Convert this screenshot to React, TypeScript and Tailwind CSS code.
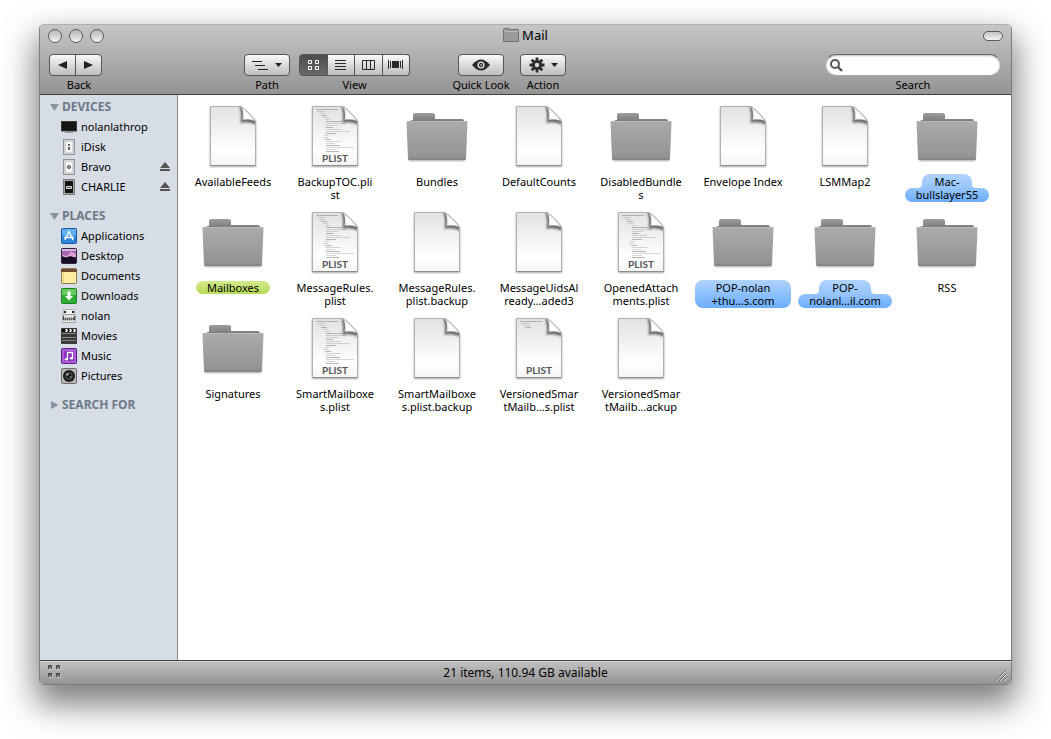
import React, { useState } from 'react';
import { clsx } from 'clsx';

type FileKind = 'doc' | 'plist' | 'folder';
type Tint = 'blue' | 'green';

interface FileEntry {
  lines: string[];
  kind: FileKind;
  tint?: Tint;
  preview?: number;
}

const files: FileEntry[] = [
  { lines: ['AvailableFeeds'], kind: 'doc' },
  { lines: ['BackupTOC.pli', 'st'], kind: 'plist' },
  { lines: ['Bundles'], kind: 'folder' },
  { lines: ['DefaultCounts'], kind: 'doc' },
  { lines: ['DisabledBundle', 's'], kind: 'folder' },
  { lines: ['Envelope Index'], kind: 'doc' },
  { lines: ['LSMMap2'], kind: 'doc' },
  { lines: ['Mac-', 'bullslayer55'], kind: 'folder', tint: 'blue' },
  { lines: ['Mailboxes'], kind: 'folder', tint: 'green' },
  { lines: ['MessageRules.', 'plist'], kind: 'plist' },
  { lines: ['MessageRules.', 'plist.backup'], kind: 'doc' },
  { lines: ['MessageUidsAl', 'ready…aded3'], kind: 'doc' },
  { lines: ['OpenedAttach', 'ments.plist'], kind: 'plist' },
  { lines: ['POP-nolan', '+thu…s.com'], kind: 'folder', tint: 'blue' },
  { lines: ['POP-', 'nolanl…il.com'], kind: 'folder', tint: 'blue' },
  { lines: ['RSS'], kind: 'folder' },
  { lines: ['Signatures'], kind: 'folder' },
  { lines: ['SmartMailboxe', 's.plist'], kind: 'plist' },
  { lines: ['SmartMailboxe', 's.plist.backup'], kind: 'doc' },
  { lines: ['VersionedSmar', 'tMailb…s.plist'], kind: 'plist', preview: 4 },
  { lines: ['VersionedSmar', 'tMailb…ackup'], kind: 'doc' },
];

// Indent and length of each text line on the plist preview
const previewLines = [
  [13, 22], [14, 8], [16, 6], [18, 6], [20, 5], [22, 5],
  [23, 16], [23, 20], [23, 12], [23, 7], [23, 15], [23, 24], [23, 10],
  [21, 5], [20, 5], [22, 6], [23, 15], [23, 9], [23, 14], [23, 28], [23, 10], [23, 13],
];

const Defs: React.FC = () => (
  <svg width="0" height="0" className="absolute" aria-hidden="true">
    <defs>
      <linearGradient id="paper" x1="0" y1="0" x2="0" y2="1">
        <stop offset="0" stopColor="#e2e2e2" />
        <stop offset="0.45" stopColor="#f3f3f3" />
        <stop offset="0.75" stopColor="#ffffff" />
        <stop offset="1" stopColor="#f4f4f4" />
      </linearGradient>
      <linearGradient id="fold" x1="0" y1="1" x2="1" y2="0">
        <stop offset="0" stopColor="#c4c4c4" />
        <stop offset="0.3" stopColor="#ffffff" />
        <stop offset="1" stopColor="#f0f0f0" />
      </linearGradient>
      <linearGradient id="folderFront" x1="0" y1="0" x2="0" y2="1">
        <stop offset="0" stopColor="#ababab" />
        <stop offset="0.92" stopColor="#949494" />
        <stop offset="1" stopColor="#808080" />
      </linearGradient>
      <linearGradient id="folderBack" x1="0" y1="0" x2="0" y2="1">
        <stop offset="0" stopColor="#9c9c9c" />
        <stop offset="1" stopColor="#6f6f6f" />
      </linearGradient>
      <filter id="soft" x="-20%" y="-20%" width="140%" height="140%">
        <feGaussianBlur stdDeviation="1" />
      </filter>
      <clipPath id="page">
        <path d="M10 3h30q8 5.500 14 14v44H10z" />
      </clipPath>
    </defs>
  </svg>
);

const FolderIcon: React.FC<{ className?: string }> = ({ className }) => (
  <svg viewBox="0 0 64 64" className={className} aria-hidden="true">
    <path d="M4 53h56v4H4z" fill="#000" opacity="0.35" filter="url(#soft)" />
    <path d="M5 20v-3q1-1 3-1v-5q0-2 2-2h17q3 0 3 2v4h27q2 0 2 2v4z" fill="url(#folderBack)" />
    <path d="M1.500 18.500q-0.500-1.500 1.500-1.500h58q2 0 1.500 1.500l-1.500 36q0 1.500-1.500 1.500H4.500q-1.500 0-1.500-1.500z" fill="url(#folderFront)" />
    <path d="M3 17.500h58" stroke="#b8b8b8" strokeWidth="1" />
  </svg>
);

const DocIcon: React.FC<{ preview?: number; className?: string }> = ({ preview = 0, className }) => (
  <svg viewBox="0 0 64 64" className={className} aria-hidden="true">
    <path d="M9 3h32l14 15v45H9z" fill="#000" opacity="0.35" filter="url(#soft)" />
    <path d="M9.500 2.500h30.500q8 5.500 14.500 14v45h-45z" fill="url(#paper)" stroke="#b0b0b0" strokeWidth="1" />
    <path d="M9.500 61.500h45" stroke="#8c8c8c" strokeWidth="1" />
    {previewLines.slice(0, preview).map(([x, w], i) => (
      <rect key={i} x={x} y={5 + i * 2} width={w} height="1" fill="#9a9a9a" opacity={i % 3 === 0 ? 0.7 : 0.4} />
    ))}
    {preview > 0 && (
      <text x="32" y="58" textAnchor="middle" fontSize="10" fontWeight="700" fill="#555" fontFamily="Lato, 'Noto Sans', sans-serif">
        PLIST
      </text>
    )}
    <g clipPath="url(#page)">
      <path d="M38 1q3 8 1.500 18q8-2 16 2V14z" fill="#000" opacity="0.55" filter="url(#soft)" />
      <path d="M40 2.500q3 5 1.500 13.500q8-1.500 13.500 1.500q-6.500-9.500-15-15z" fill="url(#fold)" stroke="#8f8f8f" strokeWidth="0.500" />
    </g>
  </svg>
);

const Fillet: React.FC<{ side: 'left' | 'right' }> = ({ side }) => (
  <svg
    viewBox="0 0 4 4"
    className={clsx('absolute bottom-0 h-1 w-1', side === 'left' ? 'right-full' : 'left-full')}
    aria-hidden="true"
  >
    <path d={side === 'left' ? 'M4 0v4H0q4 0 4-4z' : 'M0 0v4h4q-4 0-4-4z'} fill="#96c4fb" />
  </svg>
);

const FileLabel: React.FC<{ file: FileEntry }> = ({ file }) => {
  const { lines, tint } = file;

  if (tint === 'green') {
    return (
      <span className="rounded-full bg-gradient-to-b from-[#d3ea8c] to-[#b5da57] px-[11px]">{lines[0]}</span>
    );
  }

  if (tint === 'blue') {
    // A short first line makes a stepped outline, otherwise one block is drawn
    const stepped = lines[0].length < 6;
    if (!stepped) {
      return (
        <span className="-mt-px flex w-24 flex-col items-center rounded-lg bg-gradient-to-b from-[#afd3fd] to-[#6aadfa] py-px">
          {lines.map((line) => (
            <span key={line}>{line}</span>
          ))}
        </span>
      );
    }
    return (
      <span className="-mt-px flex flex-col items-center">
        <span className="relative rounded-t-lg bg-gradient-to-b from-[#afd3fd] to-[#96c4fb] px-[13px] pt-px">
          <Fillet side="left" />
          {lines[0]}
          <Fillet side="right" />
        </span>
        <span className="rounded-full bg-gradient-to-b from-[#96c4fb] to-[#6aadfa] px-[11px] pb-px">{lines[1]}</span>
      </span>
    );
  }

  return (
    <>
      {lines.map((line) => (
        <span key={line}>{line}</span>
      ))}
    </>
  );
};

const FileItem: React.FC<{ file: FileEntry }> = ({ file }) => (
  <button type="button" className="flex h-[106px] flex-col items-center gap-[7px] leading-[13px] whitespace-nowrap">
    {file.kind === 'folder' ? (
      <FolderIcon className="h-16 w-16" />
    ) : (
      <DocIcon preview={file.kind === 'plist' ? (file.preview ?? previewLines.length) : 0} className="h-16 w-16" />
    )}
    <span className="flex flex-col items-center">
      <FileLabel file={file} />
    </span>
  </button>
);

/* Sidebar icons, all on a 16px grid */
const icons: Record<string, React.ReactNode> = {
  nolanlathrop: (
    <>
      <rect x="0.500" y="2.500" width="15" height="9.500" fill="#151515" stroke="#3c3c3c" />
      <path d="M6 12h4v1.500H6z" fill="#8d8d8d" />
      <path d="M4 13.500h8" stroke="#9a9a9a" />
    </>
  ),
  iDisk: (
    <>
      <rect x="2.500" y="0.500" width="11" height="15" fill="#d2d3d4" stroke="#8f9296" />
      <rect x="5" y="3" width="6" height="10" fill="#f6f6f6" />
      <path d="M7 5h2v2H7zM7 8h2v3H7z" fill="#636363" />
    </>
  ),
  Bravo: (
    <>
      <rect x="2.500" y="0.500" width="11" height="15" fill="#d2d3d4" stroke="#8f9296" />
      <rect x="5" y="3" width="6" height="10" fill="#f6f6f6" />
      <circle cx="8" cy="8" r="1.500" fill="#aaa" stroke="#555" />
    </>
  ),
  CHARLIE: (
    <>
      <rect x="2.500" y="0.500" width="11" height="15" fill="#a9a9a9" stroke="#777" />
      <rect x="4" y="2" width="8" height="12" fill="#141414" />
      <path d="M5.500 7.500h5v2h-5z" fill="#555" stroke="#ddd" />
    </>
  ),
  Applications: (
    <>
      <rect x="0.500" y="0.500" width="15" height="15" rx="1" fill="#2e86dc" stroke="#1c559c" />
      <path d="M1 1h14v6q-7 3-14 0z" fill="#63b0f0" />
      <path d="M4 12l4-8.500 4 8.500M3 9.500h10" fill="none" stroke="#fff" strokeWidth="1.300" />
    </>
  ),
  Desktop: (
    <>
      <rect x="0.500" y="0.500" width="15" height="15" rx="1" fill="#51306f" stroke="#33203f" />
      <path d="M1 3h14v6H1z" fill="#a765b4" />
      <path d="M1 7l5 1 4-4 5 2v3H1z" fill="#dba1d3" />
      <path d="M1 1h14v2H1z" fill="#d3b8e0" />
      <path d="M1 8l4 2 4-2 6 2v5H1z" fill="#160f24" />
    </>
  ),
  Documents: (
    <>
      <rect x="0.500" y="0.500" width="15" height="15" rx="1" fill="#fbeea2" stroke="#8a7c4c" />
      <path d="M0 1h16v3H0z" fill="#6d4a32" />
      <path d="M2.500 4v11" stroke="#e3cf80" />
    </>
  ),
  Downloads: (
    <>
      <rect x="0.500" y="0.500" width="15" height="15" rx="1" fill="#2fae36" stroke="#1f7a26" />
      <path d="M1 1h14v6H1z" fill="#67cb62" />
      <path d="M6.500 3.500h3V8H12l-4 4.500L4 8h2.500z" fill="#fff" />
    </>
  ),
  nolan: (
    <>
      <path d="M2.500 1.500h11V7h-11z" fill="#f2f2f2" stroke="#b4b4b4" />
      <path d="M3 3h2v2H3zM11 3h2v2h-2z" fill="#222" />
      <path d="M1.500 6.500h13v8h-13z" fill="#e2e2e2" stroke="#a3a3a3" />
      <path d="M2.500 8v4M13.500 8v4M2.500 11h11" stroke="#444" />
      <path d="M4.500 9.500v3M6.500 9.500v3M8.500 9.500v3M10.500 9.500v3M12.500 9.500v3" stroke="#666" />
    </>
  ),
  Movies: (
    <>
      <rect x="0" y="0" width="16" height="16" rx="1" fill="#3a3a3a" />
      <path d="M1 1h14v3H1z" fill="#111" />
      <path d="M4 1h2l1 1.500L6 4H4l1-1.500zM8 1h2l1 1.500L10 4H8l1-1.500zM12 1h2l1 1.500L14 4h-2l1-1.500z" fill="#fff" />
      <path d="M1 5.500h14M1 9.500h14M1 12.500h14" stroke="#858585" />
    </>
  ),
  Music: (
    <>
      <rect x="0.500" y="0.500" width="15" height="15" rx="1" fill="#8d31c4" stroke="#5b1c86" />
      <rect x="2" y="2" width="12" height="12" fill="none" stroke="#c48be6" />
      <path d="M6.500 11V4.500h5V10" fill="none" stroke="#fff" strokeWidth="1.300" />
      <ellipse cx="5.500" cy="11.300" rx="1.700" ry="1.300" fill="#fff" />
      <ellipse cx="10.500" cy="10.300" rx="1.700" ry="1.300" fill="#fff" />
    </>
  ),
  Pictures: (
    <>
      <rect x="0.500" y="0.500" width="15" height="15" rx="1" fill="#b9b9b9" stroke="#6d6d6d" />
      <circle cx="8" cy="8" r="6" fill="#1b1b1b" />
      <circle cx="8" cy="8" r="4" fill="#3c3f3c" />
      <circle cx="8" cy="8" r="2" fill="#0c0c1c" />
      <circle cx="6.500" cy="6.500" r="1.200" fill="#b8a0a8" />
      <circle cx="9.500" cy="9" r="1" fill="#5f9a68" />
    </>
  ),
};

const devices = [
  { name: 'nolanlathrop' },
  { name: 'iDisk' },
  { name: 'Bravo', eject: true },
  { name: 'CHARLIE', eject: true },
];

const places = ['Applications', 'Desktop', 'Documents', 'Downloads', 'nolan', 'Movies', 'Music', 'Pictures'].map(
  (name) => ({ name, eject: false })
);

const SidebarRow: React.FC<{ name: string; eject?: boolean }> = ({ name, eject }) => (
  <li className="flex h-5 items-center pr-[7px] pl-[21px]">
    <a href={`#${name}`} className="flex flex-1 items-center gap-1">
      <svg viewBox="0 0 16 16" className="h-4 w-4" aria-hidden="true">
        {icons[name]}
      </svg>
      {name}
    </a>
    {eject && (
      <button type="button" aria-label={`Eject ${name}`}>
        <svg viewBox="0 0 10 10" className="h-2.5 w-2.5" aria-hidden="true">
          <path d="M5 0l5 6H0zM0 7h10v2H0z" fill="#555" />
        </svg>
      </button>
    )}
  </li>
);

const SidebarSection: React.FC<{ title: string; items: { name: string; eject?: boolean }[] }> = ({ title, items }) => {
  const [open, setOpen] = useState(items.length > 0);

  return (
    <section className="mb-[9px]">
      <h2>
        <button
          type="button"
          aria-expanded={open}
          onClick={() => setOpen(!open)}
          className="flex h-5 items-center gap-[3px] pl-2.5 text-xs font-bold text-[#6e7a89]"
        >
          <svg viewBox="0 0 9 9" className="h-[9px] w-[9px]" aria-hidden="true">
            <path d={open ? 'M0 1h9L4.500 8z' : 'M1 0v8L8.500 4z'} fill="#88919e" />
          </svg>
          {title}
        </button>
      </h2>
      {open && (
        <ul>
          {items.map((item) => (
            <SidebarRow key={item.name} {...item} />
          ))}
        </ul>
      )}
    </section>
  );
};

const toolButton =
  'flex h-[22px] items-center justify-center border border-[#555] bg-gradient-to-b from-[#fafafa] to-[#bebebe] text-[#2b2b2b]';

const ToolGroup: React.FC<{ label: string; className?: string; children: React.ReactNode }> = ({
  label,
  className,
  children,
}) => (
  <div className={clsx('flex flex-col gap-px', className)}>
    <div className="flex">{children}</div>
    <span className="text-center leading-4 whitespace-nowrap">{label}</span>
  </div>
);

const DropArrow: React.FC = () => (
  <svg viewBox="0 0 7 4" className="h-1 w-[7px]" aria-hidden="true">
    <path d="M0 0h7L3.500 4z" fill="#222" />
  </svg>
);

const viewModes = [
  {
    name: 'Icons',
    art: <path d="M2.500 2.500h3v3h-3zM9.500 2.500h3v3h-3zM2.500 8.500h3v3h-3zM9.500 8.500h3v3h-3z" />,
  },
  { name: 'List', art: <path d="M2 2.500h11M2 5.500h11M2 8.500h11M2 11.500h11" /> },
  { name: 'Columns', art: <path d="M1.500 2.500h12v9h-12zM5.500 2.500v9M9.500 2.500v9" /> },
  {
    name: 'Cover Flow',
    art: (
      <>
        <rect x="4" y="3" width="7" height="7" fill="currentColor" stroke="none" />
        <path d="M0.500 2v9M2.500 3v7M12.500 3v7M14.500 2v9" />
      </>
    ),
  },
];

const Toolbar: React.FC = () => {
  const [mode, setMode] = useState('Icons');

  return (
    <div className="flex items-start pt-2 pr-2.5 pl-[9px]">
      <ToolGroup label="Back" className="w-[60px]">
        <button type="button" aria-label="Back" className={clsx(toolButton, 'w-[27px] rounded-l')}>
          <svg viewBox="0 0 9 8" className="h-2 w-[9px]" aria-hidden="true">
            <path d="M9 0v8L0 4z" fill="#222" />
          </svg>
        </button>
        <button type="button" aria-label="Forward" className={clsx(toolButton, '-ml-px w-[27px] rounded-r')}>
          <svg viewBox="0 0 9 8" className="h-2 w-[9px]" aria-hidden="true">
            <path d="M0 0v8l9-4z" fill="#222" />
          </svg>
        </button>
      </ToolGroup>

      <ToolGroup label="Path" className="ml-[135px]">
        <button type="button" aria-label="Path" className={clsx(toolButton, 'w-[46px] gap-1.5 rounded')}>
          <svg viewBox="0 0 17 10" className="h-2.5 w-[17px]" fill="none" stroke="#222" aria-hidden="true">
            <path d="M0 1.500h10M3 5.500h10M6 9.500h10" />
          </svg>
          <DropArrow />
        </button>
      </ToolGroup>

      <ToolGroup label="View" className="ml-[9px] w-[111px]">
        {viewModes.map(({ name, art }, i) => (
          <button
            key={name}
            type="button"
            aria-label={`${name} view`}
            aria-pressed={mode === name}
            onClick={() => setMode(name)}
            className={clsx(
              'flex h-[22px] flex-1 items-center justify-center border-y border-r border-[#555]',
              i === 0 && 'rounded-l border-l',
              i === viewModes.length - 1 && 'rounded-r',
              mode === name
                ? 'bg-gradient-to-b from-[#4b4b4b] to-[#6a6a6a] text-white'
                : 'bg-gradient-to-b from-[#fafafa] to-[#bebebe] text-[#2b2b2b]'
            )}
          >
            <svg viewBox="0 0 15 14" className="h-3.5 w-[15px]" fill="none" stroke="currentColor" aria-hidden="true">
              {art}
            </svg>
          </button>
        ))}
      </ToolGroup>

      <ToolGroup label="Quick Look" className="ml-[41px] w-[60px] items-center">
        <button type="button" aria-label="Quick Look" className={clsx(toolButton, 'w-[46px] rounded')}>
          <svg viewBox="0 0 18 12" className="h-3 w-[18px]" aria-hidden="true">
            <path d="M0 6q9-11 18 0q-9 11-18 0z" fill="#2b2b2b" />
            <circle cx="9" cy="6" r="3.500" fill="#e8e8e8" />
            <circle cx="9" cy="6" r="2.200" fill="#2b2b2b" />
            <circle cx="9" cy="6" r="0.800" fill="#fff" />
          </svg>
        </button>
      </ToolGroup>

      <ToolGroup label="Action" className="ml-[9px]">
        <button type="button" aria-label="Action" className={clsx(toolButton, 'w-[46px] gap-1.5 rounded')}>
          <svg viewBox="0 0 16 16" className="h-4 w-4" aria-hidden="true">
            <path
              d="M8 0.500v15M0.500 8h15M2.700 2.700l10.600 10.600M13.300 2.700L2.700 13.300"
              stroke="#2b2b2b"
              strokeWidth="2.800"
            />
            <circle cx="8" cy="8" r="5" fill="#2b2b2b" />
            <circle cx="8" cy="8" r="2.200" fill="#dadada" />
          </svg>
          <DropArrow />
        </button>
      </ToolGroup>

      <div className="ml-auto flex w-44 flex-col items-center gap-px">
        <div className="flex h-[22px] w-full items-center gap-1 rounded-full border border-[#a8a8a8] border-t-[#666] bg-white pl-1 shadow-[inset_0_1px_2px_#bbb]">
          <svg viewBox="0 0 13 13" className="h-[13px] w-[13px]" fill="none" stroke="#555" aria-hidden="true">
            <circle cx="5" cy="5" r="4" strokeWidth="2" />
            <path d="M8 8l4 4" strokeWidth="2.400" />
          </svg>
          <input id="search" type="search" className="min-w-0 flex-1 bg-transparent outline-none" />
        </div>
        <label htmlFor="search" className="leading-4">
          Search
        </label>
      </div>
    </div>
  );
};

const TitleBar: React.FC = () => (
  <div className="grid h-[21px] grid-cols-3 items-center px-2">
    <div className="flex gap-[7px]">
      {['Close', 'Minimize', 'Zoom'].map((name) => (
        <button
          key={name}
          type="button"
          aria-label={name}
          className="h-3.5 w-3.5 rounded-full border border-[#5a5a5a] bg-gradient-to-b from-[#b5b5b5] to-[#f4f4f4]"
        />
      ))}
    </div>
    <h1 className="flex items-center justify-center gap-[3px] pb-0.5 text-[13px] leading-4">
      <svg viewBox="0 0 16 14" className="h-3.5 w-4" aria-hidden="true">
        <path d="M0.500 13.500v-12q0-1 1-1h4q1 0 1 1h8q1 0 1 1v11z" fill="#9b9b9b" stroke="#707070" />
        <path d="M1 3.500h14" stroke="#b8b8b8" />
      </svg>
      Mail
    </h1>
    <button
      type="button"
      aria-label="Toggle toolbar"
      className="h-2.5 w-5 justify-self-end rounded-full border border-[#5a5a5a] bg-gradient-to-b from-[#c4c4c4] to-[#f4f4f4]"
    />
  </div>
);

const StatusBar: React.FC = () => (
  <footer className="flex h-6 items-start justify-between border-t border-[#404040] bg-gradient-to-b from-[#c2c2c2] to-[#949494] px-1 shadow-[inset_0_1px_0_#d8d8d8]">
    <svg viewBox="0 0 20 20" className="h-5 w-5" aria-hidden="true">
      <path d="M5 5h4v4H5zM13 5h4v4h-4zM5 13h4v4H5zM13 13h4v4h-4z" fill="#c5c5c5" />
      <path d="M4 4h4v4H4zM12 4h4v4h-4zM4 12h4v4H4zM12 12h4v4h-4z" fill="#4e4e4e" />
      <path d="M5 6h2v2H5zM13 6h2v2h-2zM5 14h2v2H5zM13 14h2v2h-2z" fill="#8a8a8a" />
    </svg>
    <p className="text-xs leading-6">21 items, 110.94 GB available</p>
    <svg viewBox="0 0 20 20" className="h-5 w-5" aria-hidden="true">
      <path d="M9 20L20 9M13 20l7-7M17 20l3-3" stroke="#dcdcdc" />
      <path d="M8.500 19.500l11-11M12.500 19.500l7-7M16.500 19.500l3-3" stroke="#5c5c5c" />
    </svg>
  </footer>
);

const App: React.FC = () => {
  return (
    <div className="flex min-h-screen flex-col bg-white px-[39px] pt-6 pb-[54px] font-['Noto_Sans',sans-serif] text-[11px] text-black">
      <Defs />
      <div className="flex flex-1 flex-col overflow-hidden rounded-[5px] border border-[#7d7d7d] border-t-[#b0b0b0] shadow-[0_16px_32px_4px_rgba(0,0,0,0.5)]">
        <header className="h-[70px] border-b border-[#404040] bg-gradient-to-b from-[#c6c6c6] to-[#949494]">
          <TitleBar />
          <Toolbar />
        </header>

        <div className="flex flex-1">
          <nav className="w-[138px] shrink-0 border-r border-[#8b8b8b] bg-[#d6dde5] pt-0.5" aria-label="Sidebar">
            <SidebarSection title="DEVICES" items={devices} />
            <SidebarSection title="PLACES" items={places} />
            <SidebarSection title="SEARCH FOR" items={[]} />
          </nav>
          <main className="grid flex-1 auto-rows-min grid-cols-[repeat(auto-fill,102px)] bg-white pt-[9px] pl-1">
            {files.map((file) => (
              <FileItem key={file.lines.join('')} file={file} />
            ))}
          </main>
        </div>

        <StatusBar />
      </div>
    </div>
  );
};

export default App;
